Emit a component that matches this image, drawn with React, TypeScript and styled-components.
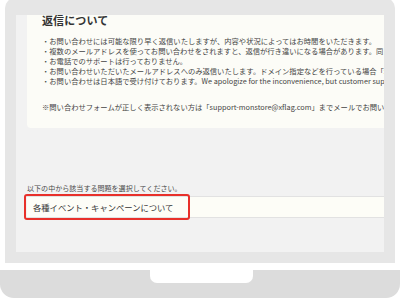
import React from 'react';
import styled, { createGlobalStyle } from 'styled-components';

const GlobalStyle = createGlobalStyle`
    html, body {
        margin: 0;
        padding: 0;
        background: #ffffff;
    }
    body {
        width: 400px;
        height: 299px;
        overflow: hidden;
        font-family: "Noto Sans CJK JP", "Noto Sans", sans-serif;
    }
`;

const Laptop = styled.div`
    display: flex;
    flex-direction: column;
    width: 400px;
    height: 299px;
`;

const Lid = styled.div`
    margin: -2px 5px 0;
    padding: 17px 11px 11px;
    height: 237px;
    background: #e6e6e6;
    border-radius: 10px 10px 0 0;
`;

const Screen = styled.div`
    height: 237px;
    background: #f2f2f2;
    overflow: hidden;
    padding-left: 11px;
    display: flex;
    flex-direction: column;
`;

const Panel = styled.div`
    height: 113px;
    background: #fcfcf7;
    border-radius: 0 0 0 4px;
    padding: 0 0 0 15px;
    overflow: hidden;
    white-space: nowrap;
`;

const Heading = styled.h2`
    margin: -1px 0 0;
    font-size: 11px;
    line-height: 13px;
    font-weight: 700;
    color: #333;
    letter-spacing: 0.1px;
`;

const Notes = styled.ul`
    list-style: none;
    margin: 9px 0 0;
    padding: 0;
`;

const Note = styled.li<{ $gap?: number }>`
    font-size: 7.3px;
    line-height: 10px;
    color: #444;
    margin-top: ${(p) => p.$gap ?? 0}px;
`;

const Question = styled.div`
    margin-top: 55px;
    display: flex;
    flex-direction: column;
    gap: 3px;
`;

const Label = styled.div`
    font-size: 7.05px;
    line-height: 10px;
    color: #4a4a4a;
    white-space: nowrap;
`;

const SelectWrap = styled.div`
    position: relative;
`;

const Select = styled.div`
    height: 20px;
    background: #fdfdf7;
    border-top: 1px solid #e2e2e2;
    border-bottom: 1px solid #e2e2e2;
    display: flex;
    align-items: center;
    padding-left: 6px;
    font-size: 8.3px;
    color: #333;
    white-space: nowrap;
`;

// red frame drawn over the select field
const Highlight = styled.div`
    position: absolute;
    left: -3px;
    top: -2px;
    width: 162px;
    height: 22px;
    border: 2px solid #e8302a;
    border-radius: 3px;
    pointer-events: none;
`;

const Base = styled.div`
    margin-top: 7px;
    height: 28px;
    background: #dcdcdc;
    border-radius: 0 0 14px 14px;
`;

const Notch = styled.div`
    margin-left: 150px;
    width: 103px;
    height: 13px;
    background: #ffffff;
    border-radius: 0 0 7px 7px;
`;

const lines = [
    '・お問い合わせには可能な限り早く返信いたしますが、内容や状況によってはお時間をいただきます。',
    '・複数のメールアドレスを使ってお問い合わせをされますと、返信が行き違いになる場合があります。同じ内容のお問い合わせは一度のみお送りください。',
    '・お電話でのサポートは行っておりません。',
    '・お問い合わせいただいたメールアドレスへのみ返信いたします。ドメイン指定などを行っている場合「xflag.com」からのメールを受信できるよう設定してください。',
    '・お問い合わせは日本語で受け付けております。We apologize for the inconvenience, but customer support is available only in Japanese.',
];

const App = () => {
    return (
        <>
            <GlobalStyle />
            <Laptop>
                <Lid>
                    <Screen>
                        <Panel>
                            <Heading>返信について</Heading>
                            <Notes>
                                {lines.map((line) => (
                                    <Note key={line}>{line}</Note>
                                ))}
                                <Note $gap={16}>
                                    ※問い合わせフォームが正しく表示されない方は「support-monstore@xflag.com」までメールでお問い合わせください。
                                </Note>
                            </Notes>
                        </Panel>
                        <Question>
                            <Label>以下の中から該当する問題を選択してください。</Label>
                            <SelectWrap>
                                <Select>各種イベント・キャンペーンについて</Select>
                                <Highlight />
                            </SelectWrap>
                        </Question>
                    </Screen>
                </Lid>
                <Base>
                    <Notch />
                </Base>
            </Laptop>
        </>
    );
};

export default App;
